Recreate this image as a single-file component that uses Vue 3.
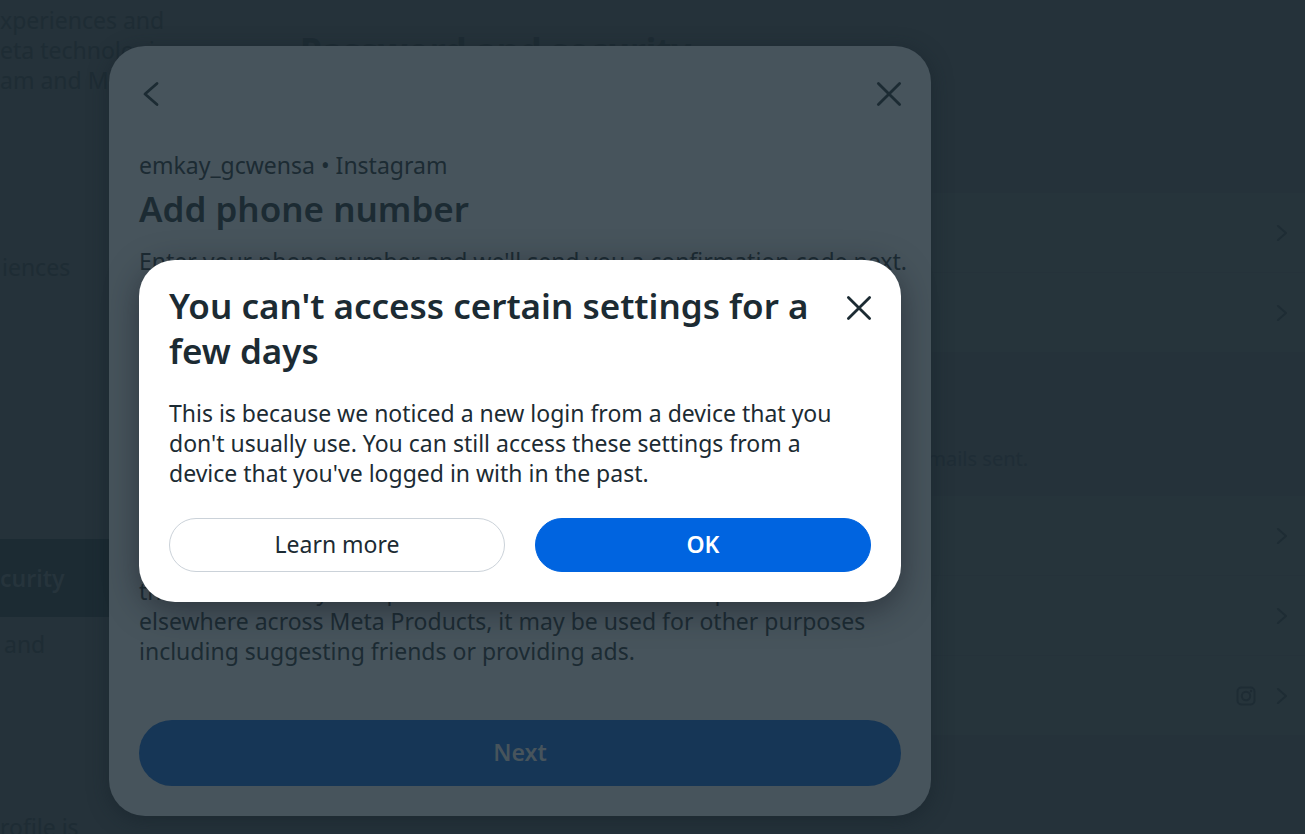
<script setup>
const groups = [
  [{ name: 'login' }, { name: 'alerts' }],
  [{ name: 'check' }, { name: 'recent' }, { name: 'emails', instagram: true }],
]
</script>

<template>
  <div class="screen">
    <div class="page" aria-hidden="true">
      <aside class="sidebar">
        <p class="intro">xperiences and<br />eta technologies<br />am and Meta</p>
        <nav class="links">
          <a class="link first" href="#">iences</a>
          <a class="link active" href="#">curity</a>
          <a class="link" href="#">and</a>
        </nav>
        <p class="note">rofile is</p>
      </aside>
      <main class="content">
        <h1 class="page-title">Password and security</h1>
        <ul class="rows">
          <li v-for="row in groups[0]" :key="row.name" class="row">
            <svg class="chevron" viewBox="0 0 12 18"><path d="M2 2l8 7-8 7" /></svg>
          </li>
        </ul>
        <p class="hint">emails sent.</p>
        <ul class="rows">
          <li v-for="row in groups[1]" :key="row.name" class="row">
            <svg v-if="row.instagram" class="instagram" viewBox="0 0 20 20">
              <rect x="1.5" y="1.5" width="17" height="17" rx="4" />
              <circle cx="10" cy="10" r="4.2" />
              <circle class="dot" cx="15" cy="5" r="1.2" />
            </svg>
            <svg class="chevron" viewBox="0 0 12 18"><path d="M2 2l8 7-8 7" /></svg>
          </li>
        </ul>
      </main>
    </div>

    <div class="layer">
      <section class="phone" aria-labelledby="phone-title">
        <header class="bar">
          <button class="icon" type="button" aria-label="Back">
            <svg viewBox="0 0 26 26"><path d="M19 2.5L7 13l12 10.5" /></svg>
          </button>
          <button class="icon" type="button" aria-label="Close">
            <svg viewBox="0 0 26 26"><path d="M2.4 2.4l21.2 21.2M23.6 2.4L2.4 23.6" /></svg>
          </button>
        </header>
        <p class="account">emkay_gcwensa • Instagram</p>
        <h2 id="phone-title" class="title">Add phone number</h2>
        <p class="lead">Enter your phone number and we'll send you a confirmation code next.</p>
        <p class="terms">
          this. If it's already set up or it's used or added to be a part<br />
          elsewhere across Meta Products, it may be used for other purposes
          including suggesting friends or providing ads.
        </p>
        <button class="next" type="button">Next</button>
      </section>
    </div>

    <div class="layer top">
      <section class="notice" role="dialog" aria-labelledby="notice-title">
        <header class="notice-head">
          <h2 id="notice-title" class="title">You can't access certain settings for a few days</h2>
          <button class="icon" type="button" aria-label="Close">
            <svg viewBox="0 0 26 26"><path d="M2.4 2.4l21.2 21.2M23.6 2.4L2.4 23.6" /></svg>
          </button>
        </header>
        <p class="message">
          This is because we noticed a new login from a device that you don't usually use. You can
          still access these settings from a device that you've logged in with in the past.
        </p>
        <div class="actions">
          <button class="action" type="button">Learn more</button>
          <button class="action primary" type="button">OK</button>
        </div>
      </section>
    </div>
  </div>
</template>

<style>
body {
  margin: 0;
  background: #25323a;
}
</style>

<style scoped>
.screen {
  position: relative;
  height: 100vh;
  overflow: hidden;
  background: #25323a;
  color: #1c2b33;
  font-family: "Noto Sans", "Open Sans", sans-serif;
  font-size: 23px;
  line-height: 30px;
}
p, h1, h2, ul {
  margin: 0;
  padding: 0;
}
button {
  font: inherit;
  color: inherit;
  padding: 0;
  border: 0;
  background: none;
  cursor: pointer;
}
svg {
  display: block;
  fill: none;
  stroke: currentColor;
  stroke-linecap: round;
  stroke-linejoin: round;
}
.page {
  display: flex;
  height: 100%;
  color: #1e2c34;
}
.sidebar {
  flex: none;
  width: 250px;
  padding-top: 5px;
}
.links {
  display: flex;
  flex-direction: column;
  padding-top: 133px;
}
.link {
  padding: 12px 4px;
  color: inherit;
  text-decoration: none;
}
.link.first {
  padding: 24px 2px 257px;
}
.link.active {
  padding: 24px 0;
  background: #1c2b33;
  color: #26343c;
  font-weight: 600;
}
.note {
  padding-top: 141px;
}
.content {
  flex: 1;
  padding: 28px 0 0 50px;
}
.page-title {
  padding-bottom: 119px;
  font-size: 35px;
  line-height: 46px;
  font-weight: 700;
}
.rows {
  list-style: none;
  background: #26343b;
}
.row {
  display: flex;
  align-items: center;
  justify-content: flex-end;
  gap: 20px;
  height: 79px;
  padding-right: 17px;
  border-bottom: 1px solid #25323a;
}
.chevron {
  width: 12px;
  height: 18px;
  stroke-width: 2;
}
.instagram {
  width: 20px;
  height: 20px;
  stroke-width: 2;
}
.instagram .dot {
  fill: currentColor;
  stroke: none;
}
.hint {
  padding: 91px 0 22px 616px;
  color: #1f2d36;
  font-size: 20px;
}
.layer {
  position: absolute;
  inset: 0;
  padding: 46px 109px;
}
.layer.top {
  padding: 260px 139px;
}
.phone {
  box-sizing: border-box;
  max-width: 822px;
  padding: 30px;
  border-radius: 36px;
  background: #47545c;
  box-shadow: 0 4px 20px rgba(20, 32, 40, 0.5);
}
.bar {
  display: flex;
  justify-content: space-between;
  padding: 5px 0 43px;
}
.bar .icon {
  margin: 0 -1px;
}
.icon {
  flex: none;
  width: 26px;
  height: 26px;
}
.icon svg {
  width: 26px;
  height: 26px;
  stroke-width: 2.8;
}
.title {
  font-size: 35px;
  line-height: 45px;
  font-weight: 600;
}
.account {
  padding-bottom: 6px;
}
.lead {
  padding: 15px 0 300px;
  white-space: nowrap;
}
.next {
  display: block;
  width: 100%;
  height: 66px;
  margin-top: 54px;
  padding-bottom: 2px;
  border-radius: 33px;
  background: #163656;
  color: #47545c;
  font-weight: 600;
}
.notice {
  box-sizing: border-box;
  max-width: 762px;
  padding: 23px 30px 30px;
  border-radius: 36px;
  background: #fff;
  box-shadow: 0 8px 32px rgba(20, 24, 32, 0.5);
}
.notice-head {
  display: flex;
  justify-content: space-between;
  gap: 20px;
}
.notice-head .icon {
  margin: 12px -1px 0 0;
}
.message {
  padding: 25px 0 30px;
}
.actions {
  display: grid;
  grid-template-columns: 1fr 1fr;
  gap: 30px;
}
.action {
  height: 54px;
  padding-bottom: 2px;
  border: 1px solid #cbd2d9;
  border-radius: 27px;
}
.action.primary {
  border-color: #0064e0;
  background: #0064e0;
  color: #fff;
  font-weight: 600;
}
</style>
